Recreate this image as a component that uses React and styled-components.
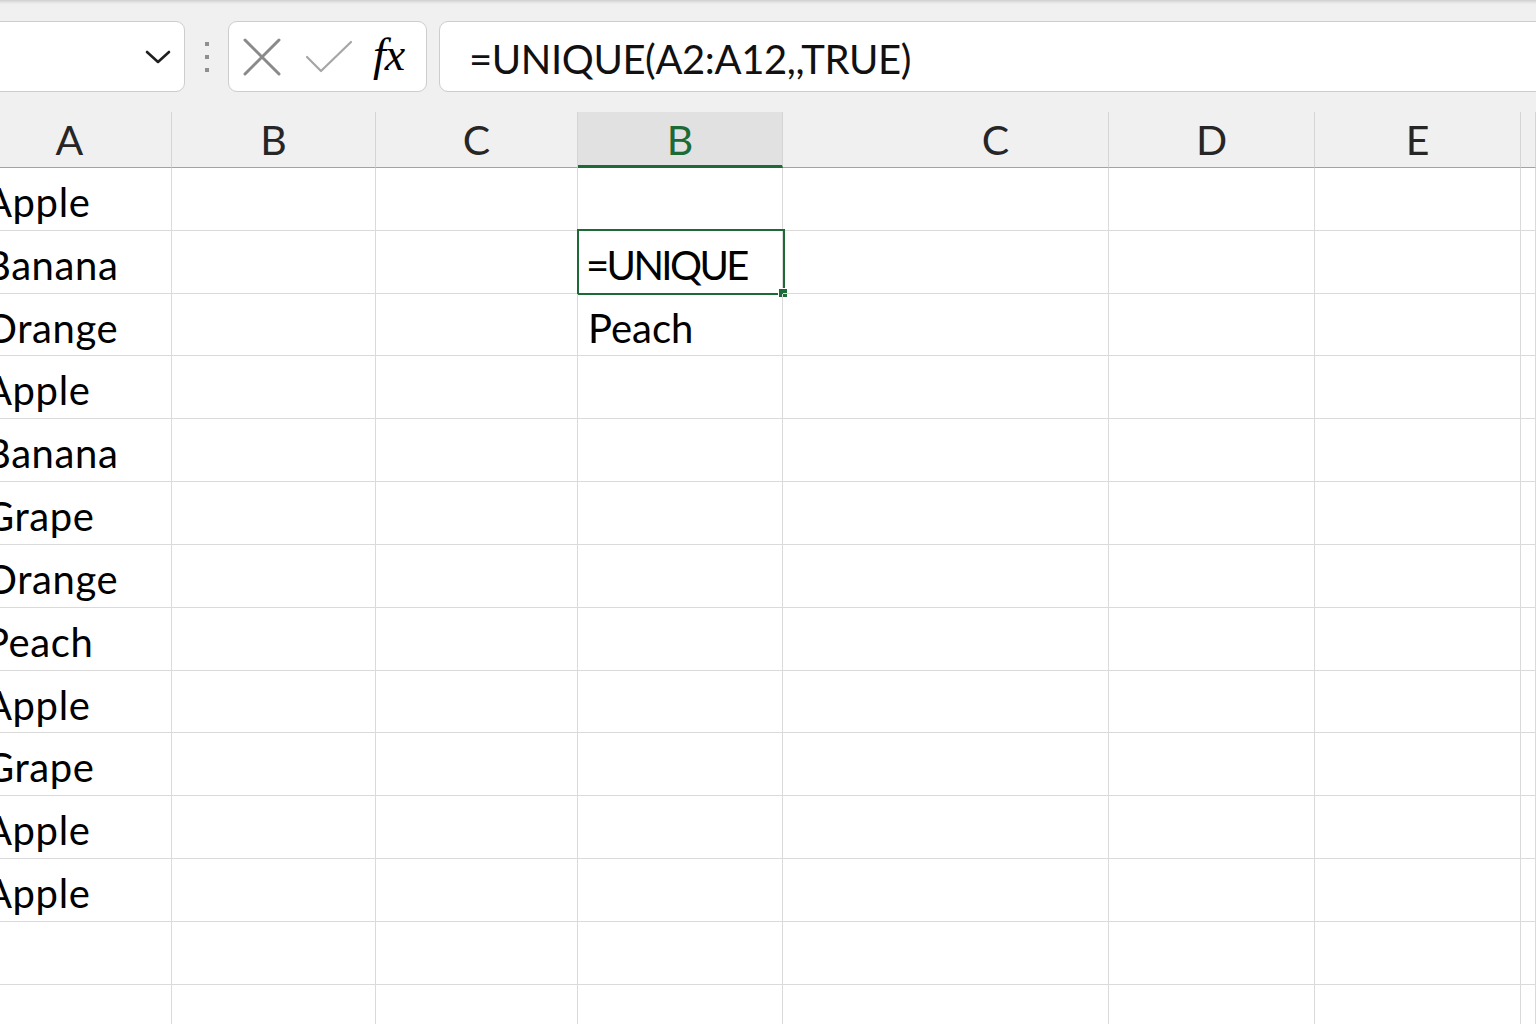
import React from "react";
import styled, { createGlobalStyle } from "styled-components";

const GlobalStyle = createGlobalStyle`
  html, body { margin: 0; padding: 0; background: #ffffff; overflow: hidden; }
  body { font-family: "Lato", "Open Sans", sans-serif; }
  * { box-sizing: border-box; }
`;

const Page = styled.div`
  width: 1536px;
  height: 1024px;
  overflow: hidden;
  background: #f0f0f0;
  display: flex;
  flex-direction: column;
`;

const TopEdge = styled.div`
  flex-shrink: 0;
  height: 5px;
  background: linear-gradient(to bottom, #cfcfcf, #e9e9e9 60%, #f0f0f0);
`;

const FormulaBar = styled.div`
  flex-shrink: 0;
  display: flex;
  align-items: center;
  height: 71px;
  margin-top: 16px;
  margin-left: -20px;
`;

const Box = styled.div`
  height: 71px;
  background: #ffffff;
  border: 1px solid #cdcdcd;
  border-radius: 9px;
  display: flex;
  align-items: center;
`;

const NameBox = styled(Box)`
  width: 205px;
  justify-content: flex-end;
  padding-right: 12px;
`;

const Grip = styled.div`
  width: 43px;
  display: flex;
  flex-direction: column;
  align-items: center;
  gap: 9px;
  span {
    width: 4px;
    height: 4px;
    background: #8f8f8f;
  }
`;

const IconBox = styled(Box)`
  width: 199px;
  padding-left: 14px;
`;

const Fx = styled.span`
  font-family: "Liberation Serif", "DejaVu Serif", serif;
  font-style: italic;
  font-size: 46px;
  color: #000;
  margin-left: 20px;
  line-height: 1;
  margin-top: -4px;
  letter-spacing: -1px;
`;

const FormulaBox = styled(Box)`
  flex: 1;
  margin-left: 12px;
  margin-right: -20px;
  padding-left: 29px;
  padding-top: 4px;
  font-size: 40px;
  color: #111;
  letter-spacing: -0.4px;
`;

const Spacer = styled.div`
  flex-shrink: 0;
  height: 20px;
`;

const Sheet = styled.div`
  display: grid;
  grid-template-columns: 204px 204px 202px 205px 326px 206px 206px 1fr;
  grid-auto-rows: 62.83px;
  grid-template-rows: 56px;
  margin-left: -32px;
  flex: 1;
  min-height: 0;
  overflow: hidden;
  background: #ffffff;
  font-size: 40px;
`;

const HeadCell = styled.div`
  background: ${(p) => (p.$active ? "#e1e1e1" : "#f0f0f0")};
  border-right: 1px solid #d5d5d5;
  border-bottom: ${(p) => (p.$active ? "3px solid #1d6a36" : "1px solid #a3a3a3")};
  color: ${(p) => (p.$active ? "#1d6a36" : "#262626")};
  display: flex;
  align-items: center;
  justify-content: center;
  padding-left: ${(p) => p.$shift || 0}px;
  padding-top: ${(p) => (p.$active ? 2 : 0)}px;
  font-size: 41px;
`;

const Cell = styled.div`
  position: relative;
  border-right: 1px solid #dadada;
  border-bottom: 1px solid #dadada;
  display: flex;
  align-items: center;
  padding-left: ${(p) => p.$pad || 10}px;
  padding-top: 6px;
  color: #000;
  white-space: nowrap;
  letter-spacing: ${(p) => (p.$pad ? "0.6px" : "0")};
`;

const Selection = styled.div`
  position: absolute;
  left: -1px;
  top: -2px;
  right: -3px;
  bottom: -2px;
  border: 2px solid #1d6a36;
  pointer-events: none;
  &::after {
    content: "";
    position: absolute;
    right: -5px;
    bottom: -5px;
    width: 8px;
    height: 8px;
    background: #1d6a36;
    border: 1px solid #fff;
  }
`;

const SelText = styled.span`
  position: relative;
  left: -2px;
  letter-spacing: -2.6px;
`;

const headers = [
  { l: "A" },
  { l: "B" },
  { l: "C" },
  { l: "B", active: true },
  { l: "C", shift: 100 },
  { l: "D" },
  { l: "E" },
  { l: "" },
];

const colA = [
  "Apple", "Banana", "Orange", "Apple", "Banana", "Grape", "Orange",
  "Peach", "Apple", "Grape", "Apple", "Apple", "", "",
];

export default function App() {
  return (
    <Page>
      <GlobalStyle />
      <TopEdge />
      <FormulaBar>
        <NameBox>
          <svg width="28" height="18" viewBox="0 0 28 18">
            <path d="M3 4 L14 14 L25 4" fill="none" stroke="#1f1f1f" strokeWidth="2.6" strokeLinecap="round" strokeLinejoin="round" />
          </svg>
        </NameBox>
        <Grip>
          <span />
          <span />
          <span />
        </Grip>
        <IconBox>
          <svg width="38" height="38" viewBox="0 0 38 38">
            <path d="M2 2 L36 36 M36 2 L2 36" stroke="#8a8a8a" strokeWidth="3" strokeLinecap="round" />
          </svg>
          <svg width="48" height="34" viewBox="0 0 48 34" style={{ marginLeft: 24 }}>
            <path d="M2 17 L16 31 L46 2" fill="none" stroke="#a6a6a6" strokeWidth="2.2" strokeLinecap="round" strokeLinejoin="round" />
          </svg>
          <Fx>fx</Fx>
        </IconBox>
        <FormulaBox>=UNIQUE(A2:A12,,TRUE)</FormulaBox>
      </FormulaBar>
      <Spacer />
      <Sheet>
        {headers.map((h, i) => (
          <HeadCell key={"h" + i} $active={h.active} $shift={h.shift}>
            {h.l}
          </HeadCell>
        ))}
        {colA.map((v, r) => (
          <React.Fragment key={"r" + r}>
            <Cell $pad={17}>{v}</Cell>
            <Cell />
            <Cell />
            <Cell>
              {r === 1 && (
                <>
                  <SelText>=UNIQUE</SelText>
                  <Selection />
                </>
              )}
              {r === 2 && "Peach"}
            </Cell>
            <Cell />
            <Cell />
            <Cell />
            <Cell />
          </React.Fragment>
        ))}
      </Sheet>
    </Page>
  );
}
